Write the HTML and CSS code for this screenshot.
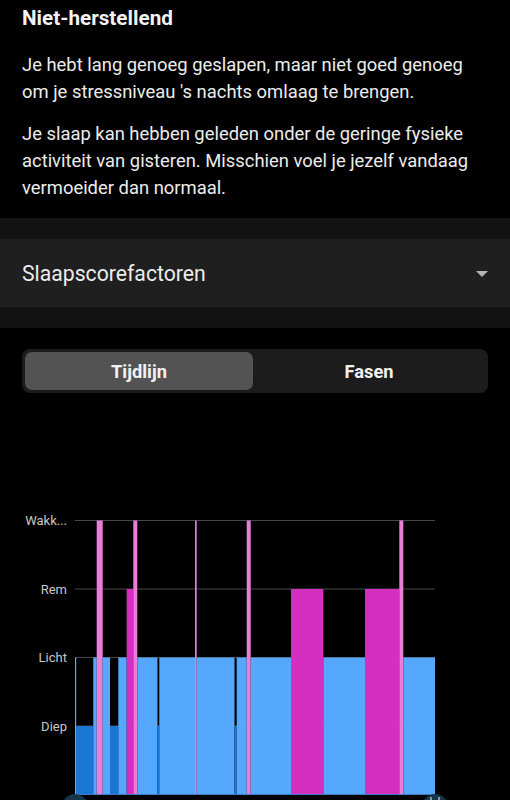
FILE: index.html
```html
<!DOCTYPE html>
<html lang="nl">
<head>
<meta charset="utf-8">
<title>Slaap</title>
<link rel="stylesheet" href="styles.css">
</head>
<body>
<section class="summary">
  <h1 class="summary-title">Niet-herstellend</h1>
  <p class="summary-text">Je hebt lang genoeg geslapen, maar niet goed genoeg om je stressniveau 's nachts omlaag te brengen.</p>
  <p class="summary-text">Je slaap kan hebben geleden onder de geringe fysieke activiteit van gisteren. Misschien voel je jezelf vandaag vermoeider dan normaal.</p>
</section>
<div class="factors-wrap">
  <div class="factors-row">
    <span class="factors-label">Slaapscorefactoren</span>
    <svg class="caret" width="12" height="6" viewBox="0 0 12 6"><path d="M0 0H12L6 6Z" fill="#b5b5b5"/></svg>
  </div>
</div>
<div class="tabs-wrap">
  <div class="tabs">
    <div class="tab tab-active">Tijdlijn</div>
    <div class="tab">Fasen</div>
  </div>
</div>
<div class="chart">
  <svg class="chart-svg" width="510" height="420" viewBox="0 0 510 420">
    <g class="labels" font-family="Roboto, sans-serif" font-size="13" fill="#c8c8c8" text-anchor="end">
      <text x="67" y="127.5" dominant-baseline="central">Wakk...</text>
      <text x="67" y="196" dominant-baseline="central">Rem</text>
      <text x="67" y="264.5" dominant-baseline="central">Licht</text>
      <text x="67" y="333" dominant-baseline="central">Diep</text>
    </g>
    <g stroke="#484848" stroke-width="1">
      <line x1="75" y1="127.5" x2="435" y2="127.5"/>
      <line x1="75" y1="196" x2="435" y2="196"/>
      <line x1="75" y1="264.5" x2="435" y2="264.5"/>
      <line x1="75" y1="333" x2="435" y2="333"/>
    </g>
    <g>
      <rect x="75" y="264.5" width="1.2" height="136.5" fill="#55a8fd"/>
      <rect x="76" y="333" width="17.3" height="68" fill="#1a76d2"/>
      <rect x="93.3" y="264.5" width="3.4" height="136.5" fill="#55a8fd"/>
      <rect x="96.7" y="127.5" width="6" height="273.5" fill="#e97ed8"/>
      <rect x="102.7" y="264.5" width="7.3" height="136.5" fill="#55a8fd"/>
      <rect x="110" y="333" width="8.3" height="68" fill="#1a76d2"/>
      <rect x="118.3" y="264.5" width="8.4" height="136.5" fill="#55a8fd"/>
      <rect x="126.7" y="196" width="6.6" height="205" fill="#d52fc2"/>
      <rect x="133.3" y="127.5" width="4" height="273.5" fill="#e97ed8"/>
      <rect x="137.3" y="264.5" width="20.2" height="136.5" fill="#55a8fd"/>
      <rect x="157.5" y="333" width="1.8" height="68" fill="#1a76d2"/>
      <rect x="159.3" y="264.5" width="35.7" height="136.5" fill="#55a8fd"/>
      <rect x="195" y="127.5" width="1.7" height="273.5" fill="#e97ed8"/>
      <rect x="196.7" y="264.5" width="37.8" height="136.5" fill="#55a8fd"/>
      <rect x="234.5" y="333" width="2.2" height="68" fill="#1a76d2"/>
      <rect x="236.7" y="264.5" width="10" height="136.5" fill="#55a8fd"/>
      <rect x="246.7" y="127.5" width="4" height="273.5" fill="#e97ed8"/>
      <rect x="250.7" y="264.5" width="40.3" height="136.5" fill="#55a8fd"/>
      <rect x="291" y="196" width="32.3" height="205" fill="#d52fc2"/>
      <rect x="323.3" y="264.5" width="41.7" height="136.5" fill="#55a8fd"/>
      <rect x="365" y="196" width="34.3" height="205" fill="#d52fc2"/>
      <rect x="399.3" y="127.5" width="4" height="273.5" fill="#e97ed8"/>
      <rect x="403.3" y="264.5" width="31.7" height="136.5" fill="#55a8fd"/>
    </g>
    <line x1="75" y1="401.5" x2="435" y2="401.5" stroke="#3d7fc4" stroke-width="1"/>
    <circle cx="75" cy="414" r="13" fill="#17364a"/>
    <circle cx="435" cy="414" r="13" fill="#17364a"/>
    <path d="M431 404v3M439 404v3" stroke="#cfd8dc" stroke-width="1.2"/>
  </svg>
</div>
</body>
</html>
```

FILE: styles.css
```css
html, body {
  margin: 0;
  padding: 0;
  background: #000;
  color: #eeeeee;
  font-family: Roboto, "Noto Sans", sans-serif;
  width: 510px;
  overflow: hidden;
}

.summary {
  padding: 6px 22px 17px 22px;
  background: #000;
}

.summary-title {
  margin: 0;
  font-size: 20.7px;
  line-height: 24px;
  font-weight: 700;
  color: #f2f2f2;
}

.summary-text {
  margin: 0;
  font-size: 18.4px;
  line-height: 27px;
  color: #ececec;
}

.summary-title + .summary-text {
  margin-top: 21px;
}

.summary-text + .summary-text {
  margin-top: 15px;
}

.factors-wrap {
  background: #121212;
  padding: 21px 0 21px 0;
}

.factors-row {
  height: 68px;
  background: #1f1f1f;
  display: flex;
  align-items: center;
  justify-content: space-between;
  padding: 0 22px;
}

.factors-label {
  font-size: 21.2px;
  color: #ececec;
}

.caret {
  display: block;
  margin-top: 1px;
}

.tabs-wrap {
  padding: 21px 22px 0 22px;
}

.tabs {
  height: 44px;
  box-sizing: border-box;
  background: #1c1c1c;
  border-radius: 8px;
  padding: 3px 3px;
  display: grid;
  grid-template-columns: 228px 1fr;
}

.tab {
  display: flex;
  align-items: center;
  justify-content: center;
  font-size: 18.3px;
  font-weight: 700;
  color: #f2f2f2;
  border-radius: 7px;
}

.tab-active {
  background: #535353;
}

.chart-svg {
  display: block;
}
```
